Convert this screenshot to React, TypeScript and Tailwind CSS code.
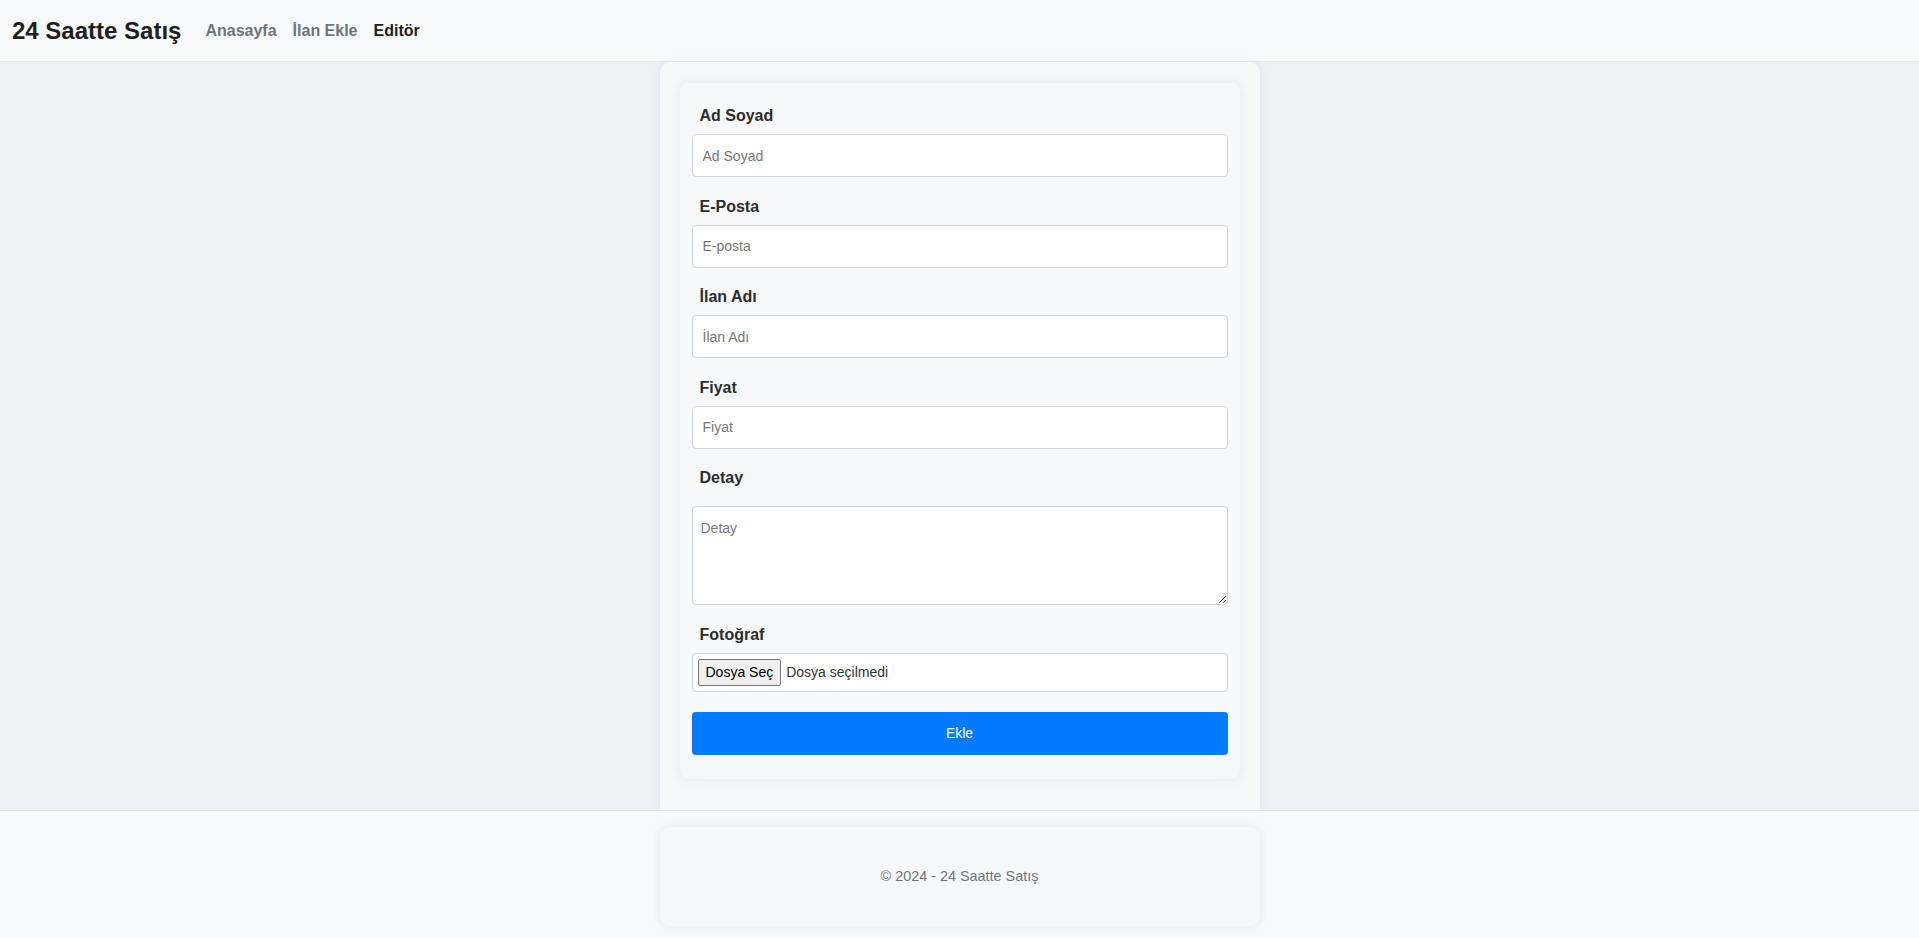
import { useState } from 'react';

const FIELDS = [
    { label: 'Ad Soyad', placeholder: 'Ad Soyad', type: 'text' },
    { label: 'E-Posta', placeholder: 'E-posta', type: 'email' },
    { label: 'İlan Adı', placeholder: 'İlan Adı', type: 'text' },
    { label: 'Fiyat', placeholder: 'Fiyat', type: 'text' },
];

const NAV = [
    { label: 'Anasayfa', active: false },
    { label: 'İlan Ekle', active: false },
    { label: 'Editör', active: true },
];

const Header = () => (
    <header className="h-[62px] shrink-0 bg-[#f8f9fa] border-b border-[#e4e7eb] flex items-center px-[12px]">
        <span className="text-[24px] font-bold text-[#1d1f21] leading-none">24 Saatte Satış</span>
        <nav className="flex items-center gap-[16px] ml-[24px]">
            {NAV.map((item) => (
                <a
                    key={item.label}
                    href="#"
                    className={`text-[16px] font-bold leading-none ${item.active ? 'text-[#1d1f21]' : 'text-[#6c757d]'}`}
                >
                    {item.label}
                </a>
            ))}
        </nav>
    </header>
);

const Label = ({ children }: { children: string }) => (
    <label className="block pl-[8px] text-[16px] font-bold leading-[18px] text-[#2b2d2f] mb-[9px]">{children}</label>
);

const IlanForm = () => {
    const [values, setValues] = useState<Record<string, string>>({});

    return (
        <form
            onSubmit={(e) => e.preventDefault()}
            className="bg-[#f7f8fa] rounded-[8px] shadow-[0_0_12px_rgba(0,0,0,0.08)] px-[12px] pt-[24px] pb-[24px]"
        >
            {FIELDS.map((field) => (
                <div key={field.label} className="mb-[20.5px]">
                    <Label>{field.label}</Label>
                    <input
                        type={field.type}
                        placeholder={field.placeholder}
                        value={values[field.label] || ''}
                        onChange={(e) => setValues({ ...values, [field.label]: e.target.value })}
                        className="block w-full h-[43px] bg-white border border-[#ced4da] rounded-[4px] pl-[10px] pr-[10px] text-[14px] text-[#333] placeholder:text-[#777] outline-none"
                    />
                </div>
            ))}
            <div className="mb-[20.5px]">
                <Label>Detay</Label>
                <textarea
                    placeholder="Detay"
                    className="block w-full h-[99px] mt-[19px] bg-white border border-[#ced4da] rounded-[4px] px-[8px] pt-[13px] text-[14px] leading-[17px] text-[#333] placeholder:text-[#777] outline-none"
                />
            </div>
            <div>
                <Label>Fotoğraf</Label>
                <div className="flex items-center h-[39px] bg-white border border-[#ced4da] rounded-[4px] pl-[5px]">
                    <span className="h-[27px] flex items-center px-[7px] bg-[#efefef] border border-[#767676] rounded-[2px] text-[14px] text-black">
                        Dosya Seç
                    </span>
                    <span className="ml-[5px] text-[14px] text-[#333]">Dosya seçilmedi</span>
                </div>
            </div>
            <button
                type="submit"
                className="block w-full h-[43px] mt-[20.5px] bg-[#007bff] rounded-[4px] text-white text-[14px]"
            >
                Ekle
            </button>
        </form>
    );
};

export default function App() {
    return (
        <div className="h-screen flex flex-col bg-[#edf0f4] overflow-hidden" style={{ fontFamily: '"Liberation Sans", Arial, sans-serif' }}>
            <Header />
            <main className="flex-1 flex justify-center min-h-0">
                <section className="w-[600px] bg-[#f7f8fa] rounded-t-[10px] shadow-[0_0_10px_rgba(0,0,0,0.06)] px-[20px] pt-[21px]">
                    <IlanForm />
                </section>
            </main>
            <footer className="h-[128px] shrink-0 bg-[#f8f9fa] border-t border-[#dfe2e6] pt-[16px] flex justify-center">
                <div className="w-[600px] h-[99px] bg-[#f7f8fa] rounded-[10px] shadow-[0_0_10px_rgba(0,0,0,0.08)] flex items-center justify-center">
                    <p className="text-[14.4px] text-[#6c757d]">© 2024 - 24 Saatte Satış</p>
                </div>
            </footer>
        </div>
    );
}
